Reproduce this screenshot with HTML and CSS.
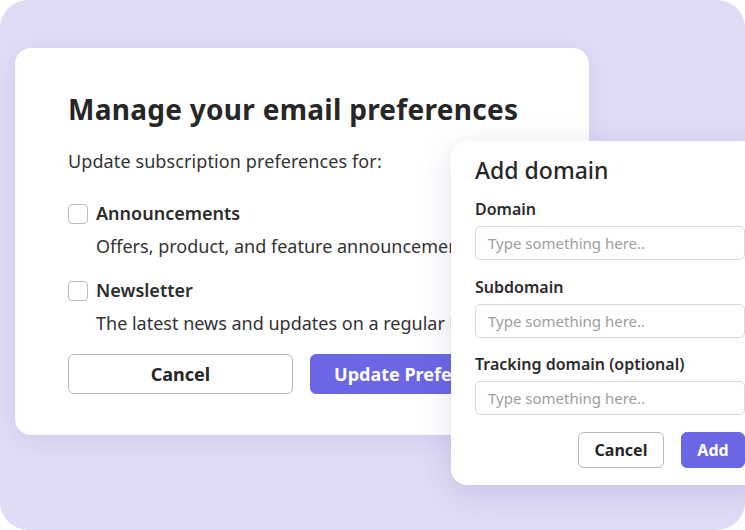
FILE: index.html
```html
<!DOCTYPE html>
<html lang="en">
<head>
<meta charset="utf-8">
<title>Email preferences</title>
<link rel="stylesheet" href="styles.css">
</head>
<body>
<div class="frame">
  <section class="prefs">
    <h1 class="prefs-title">Manage your email preferences</h1>
    <p class="prefs-sub">Update subscription preferences for:</p>
    <div class="option">
      <label class="option-row"><span class="check"></span><span class="option-name">Announcements</span></label>
      <p class="option-desc">Offers, product, and feature announcements</p>
    </div>
    <div class="option">
      <label class="option-row"><span class="check"></span><span class="option-name">Newsletter</span></label>
      <p class="option-desc">The latest news and updates on a regular basis</p>
    </div>
    <div class="prefs-actions">
      <button class="btn btn-outline btn-lg">Cancel</button>
      <button class="btn btn-primary btn-lg">Update Preferences</button>
    </div>
  </section>

  <section class="domain">
    <h2 class="domain-title">Add domain</h2>
    <div class="field field-first">
      <div class="field-label">Domain</div>
      <div class="field-input">Type something here..</div>
    </div>
    <div class="field field-second">
      <div class="field-label">Subdomain</div>
      <div class="field-input">Type something here..</div>
    </div>
    <div class="field">
      <div class="field-label">Tracking domain (optional)</div>
      <div class="field-input">Type something here..</div>
    </div>
    <div class="domain-actions">
      <button class="btn btn-outline btn-sm btn-cancel">Cancel</button>
      <button class="btn btn-primary btn-sm btn-add">Add</button>
    </div>
  </section>
</div>
</body>
</html>
```

FILE: styles.css
```css
* { box-sizing: border-box; }

html, body {
  margin: 0;
  padding: 0;
  background: #ffffff;
}

body {
  font-family: "Noto Sans", "Open Sans", sans-serif;
  color: #333333;
}

.frame {
  position: relative;
  width: 745px;
  height: 530px;
  background: #dfdcf6;
  border-radius: 28px;
  overflow: hidden;
  padding: 48px 0 0 15px;
}

.prefs {
  width: 574px;
  background: #ffffff;
  border-radius: 16px;
  padding: 43px 0 41px 53px;
  box-shadow: 0 6px 24px rgba(90, 80, 170, 0.10);
}

.prefs-title {
  margin: 0;
  font-size: 28px;
  line-height: 36px;
  font-weight: 700;
  color: #272727;
  white-space: nowrap;
  letter-spacing: 0.28px;
}

.prefs-sub {
  margin: 22px 0 0;
  font-size: 18px;
  line-height: 24px;
  color: #333333;
  letter-spacing: 0.1px;
}

.option { margin-top: 28px; }
.option + .option { margin-top: 20px; }

.option-row {
  display: flex;
  align-items: center;
  gap: 8px;
  height: 24px;
}

.check {
  width: 20px;
  height: 20px;
  border: 1.5px solid #bdbdbd;
  border-radius: 4px;
  margin-top: 2px;
  background: #fff;
}

.option-name {
  font-size: 18px;
  line-height: 24px;
  font-weight: 600;
  color: #2c2c2c;
}

.option-desc {
  margin: 9px 0 0 28px;
  font-size: 18px;
  line-height: 24px;
  color: #333333;
  white-space: nowrap;
}

.prefs-actions {
  display: flex;
  gap: 17px;
  margin-top: 19px;
}

.btn {
  font-family: "Noto Sans", "Open Sans", sans-serif;
  font-weight: 700;
  border-radius: 6px;
  display: flex;
  align-items: center;
  justify-content: center;
  padding: 0;
  white-space: nowrap;
}

.btn-lg {
  width: 225px;
  height: 40px;
  font-size: 18px;
  flex: none;
}

.btn-outline {
  background: #ffffff;
  color: #262626;
  border: 1px solid #b9b9b9;
}

.btn-primary {
  background: #6b66e4;
  color: #ffffff;
  border: 1px solid #6b66e4;
}

.domain {
  position: absolute;
  left: 451px;
  top: 141px;
  width: 318px;
  background: #ffffff;
  border-radius: 16px;
  padding: 14px 24px 17px 24px;
  box-shadow: 0 8px 32px rgba(70, 60, 150, 0.16);
}

.domain-title {
  margin: 0;
  font-size: 23px;
  line-height: 30px;
  font-weight: 500;
  color: #272727;
}

.field { margin-top: 15px; }
.field-first { margin-top: 13px; }
.field-second { margin-top: 16px; }

.field-label {
  font-size: 16px;
  line-height: 22px;
  font-weight: 600;
  color: #2c2c2c;
}

.field-input {
  margin-top: 6px;
  height: 34px;
  border: 1px solid #d9d9d9;
  border-radius: 5px;
  padding: 0 12px;
  display: flex;
  align-items: center;
  font-size: 15px;
  color: #9e9e9e;
}

.domain-actions {
  display: flex;
  justify-content: flex-end;
  gap: 17px;
  margin-top: 17px;
}

.btn-sm {
  height: 36px;
  font-size: 16px;
}

.btn-cancel { width: 86px; }
.btn-add { width: 64px; }
```
